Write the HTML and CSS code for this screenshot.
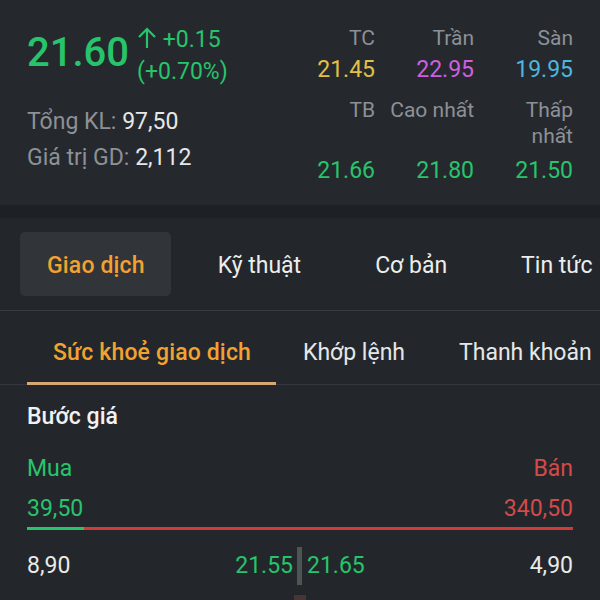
FILE: index.html
```html
<!DOCTYPE html>
<html lang="vi">
<head>
    <meta charset="UTF-8">
    <meta name="viewport" content="width=device-width, initial-scale=1.0">
    <title>Giao dịch</title>
    <link rel="stylesheet" href="styles.css">
</head>
<body>

<div class="quote">
    <div class="quote-left">
        <div class="price-row">
            <span class="price">21.60</span>
            <div class="change">
                <div>
                    <svg class="arrow" width="20" height="22" viewBox="0 0 20 22">
                        <path d="M10 21V2M2 10L10 2l8 8" fill="none" stroke="#27c46b" stroke-width="2.2"/>
                    </svg>
                    <span>+0.15</span>
                </div>
                <div>(+0.70%)</div>
            </div>
        </div>
        <div class="stat"><span class="stat-label">Tổng KL:</span> 97,50</div>
        <div class="stat"><span class="stat-label">Giá trị GD:</span> 2,112</div>
    </div>

    <div class="quote-grid">
        <div class="q-label">TC</div>
        <div class="q-label">Trần</div>
        <div class="q-label">Sàn</div>
        <div class="q-value ref">21.45</div>
        <div class="q-value ceil">22.95</div>
        <div class="q-value floor">19.95</div>
        <div class="q-label tall">TB</div>
        <div class="q-label tall">Cao nhất</div>
        <div class="q-label tall">Thấp<br>nhất</div>
        <div class="q-value up low">21.66</div>
        <div class="q-value up low">21.80</div>
        <div class="q-value up low">21.50</div>
    </div>
</div>

<div class="band"></div>

<div class="tabs">
    <div class="tab active">Giao dịch</div>
    <div class="tab">Kỹ thuật</div>
    <div class="tab">Cơ bản</div>
    <div class="tab">Tin tức</div>
</div>

<div class="subtabs">
    <div class="subtab active">Sức khoẻ giao dịch</div>
    <div class="subtab">Khớp lệnh</div>
    <div class="subtab">Thanh khoản</div>
</div>

<div class="section">
    <div class="section-title">Bước giá</div>

    <div class="side-row">
        <span class="buy">Mua</span>
        <span class="sell">Bán</span>
    </div>
    <div class="side-row values">
        <span class="buy">39,50</span>
        <span class="sell">340,50</span>
    </div>
    <div class="ratio-bar">
        <div class="ratio-buy" style="width: 10.4%"></div>
    </div>

    <div class="step-row">
        <span class="vol">8,90</span>
        <div class="step-mid">
            <span class="step-price">21.55</span>
            <span class="step-sep"></span>
            <span class="step-price">21.65</span>
        </div>
        <span class="vol right">4,90</span>
    </div>
    <div class="step-tick"></div>
</div>

</body>
</html>
```

FILE: styles.css
```css
        body {
            margin: 0;
            width: 600px;
            height: 600px;
            overflow: hidden;
            background-color: #23272c;
            font-family: Roboto, "Noto Sans", sans-serif;
            color: #e6e7e8;
        }

        /* top quote block */
        .quote {
            display: flex;
            height: 205px;
            padding: 0 27px;
            background-color: #25292e;
        }
        .quote-left {
            flex: 1;
        }
        .price-row {
            display: flex;
            align-items: flex-start;
            padding-top: 24px;
            height: 64px;
        }
        .price {
            font-size: 40px;
            font-weight: 500;
            line-height: 58px;
            color: #27c46b;
            margin-right: 8px;
        }
        .change {
            font-size: 23px;
            line-height: 32px;
            color: #27c46b;
            white-space: nowrap;
        }
        .change .arrow {
            vertical-align: -2px;
        }
        .stat {
            font-size: 23px;
            line-height: 36px;
        }
        .price-row + .stat {
            margin-top: 16px;
        }
        .stat-label {
            color: #8d9197;
        }

        .quote-grid {
            display: grid;
            grid-template-columns: repeat(3, 99px);
            align-content: start;
            text-align: right;
            padding-top: 25px;
        }
        .q-label {
            font-size: 21px;
            color: #8d9197;
            line-height: 26px;
        }
        .q-label.tall {
            margin-top: 8px;
        }
        .q-value {
            font-size: 23px;
            line-height: 38px;
        }
        .q-value.low {
            line-height: 44px;
        }
        .ref { color: #e2c046; }
        .ceil { color: #cf5fe0; }
        .floor { color: #4db6df; }
        .up { color: #27c46b; }

        .band {
            height: 13px;
            background-color: #1d2024;
        }

        /* main tabs */
        .tabs {
            display: flex;
            gap: 20px;
            padding: 14px 0 14px 20px;
            border-bottom: 1px solid #383c42;
            white-space: nowrap;
        }
        .tab {
            padding: 0 27px;
            height: 64px;
            line-height: 68px;
            font-size: 23px;
            color: #eceded;
            border-radius: 5px;
        }
        .tab.active {
            padding-right: 26px;
            background-color: #31353a;
            color: #f2a230;
            font-weight: 500;
            letter-spacing: 0.15px;
        }

        /* sub tabs */
        .subtabs {
            display: flex;
            padding-left: 27px;
            border-bottom: 1px solid #33373d;
            white-space: nowrap;
        }
        .subtab {
            padding: 27px 27px 14px;
            line-height: 30px;
            font-size: 23px;
            color: #e6e7e8;
            border-bottom: 3px solid transparent;
            margin-bottom: -1px;
        }
        .subtab.active {
            padding: 27px 25px 14px 26px;
            color: #f2a230;
            font-weight: 500;
            letter-spacing: 0.15px;
            border-bottom-color: #d8a874;
        }

        /* price step section */
        .section {
            padding: 17px 27px 0;
            font-size: 23px;
        }
        .section-title {
            line-height: 30px;
            font-weight: 500;
            color: #f2f2f2;
        }
        .side-row {
            display: flex;
            justify-content: space-between;
            line-height: 30px;
            margin-top: 22px;
        }
        .side-row.values {
            margin-top: 10px;
        }
        .buy { color: #27c46b; }
        .sell { color: #d34a48; }

        .ratio-bar {
            height: 3px;
            margin-top: 3px;
            background-color: #d03a38;
        }
        .ratio-buy {
            height: 100%;
            background-color: #27c46b;
        }

        .step-row {
            display: grid;
            grid-template-columns: 1fr auto 1fr;
            align-items: center;
            margin-top: 17px;
        }
        .vol {
            line-height: 30px;
            color: #eaeaea;
        }
        .vol.right {
            text-align: right;
        }
        .step-mid {
            display: flex;
            align-items: center;
        }
        .step-price {
            color: #27c46b;
            line-height: 30px;
        }
        .step-sep {
            width: 5px;
            height: 38px;
            margin: 0 5px 0 4px;
            background-color: #4d5552;
        }
        .step-tick {
            width: 12px;
            height: 6px;
            margin: 10px auto 0;
            background-color: #4a3436;
        }
```
